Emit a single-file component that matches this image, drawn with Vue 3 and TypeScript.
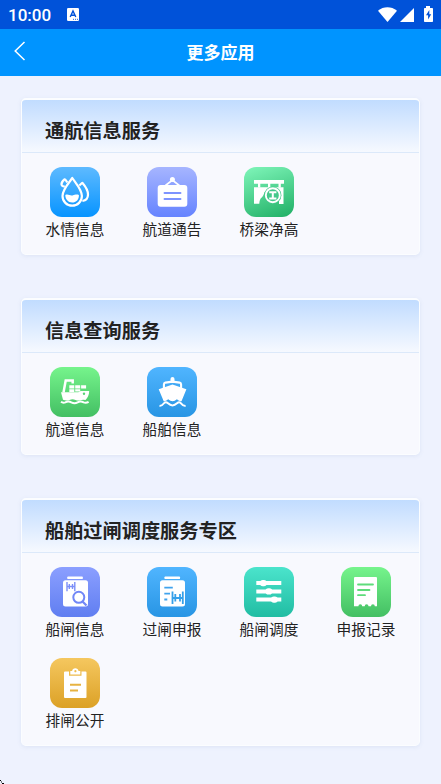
<script setup lang="ts">
type IconName =
  | 'water' | 'notice' | 'bridge' | 'cargo' | 'ship'
  | 'lockInfo' | 'declare' | 'dispatch' | 'record' | 'publish'

interface AppEntry {
  label: string
  icon: IconName
}

interface Section {
  title: string
  apps: AppEntry[]
}

const sections: Section[] = [
  {
    title: '通航信息服务',
    apps: [
      { label: '水情信息', icon: 'water' },
      { label: '航道通告', icon: 'notice' },
      { label: '桥梁净高', icon: 'bridge' },
    ],
  },
  {
    title: '信息查询服务',
    apps: [
      { label: '航道信息', icon: 'cargo' },
      { label: '船舶信息', icon: 'ship' },
    ],
  },
  {
    title: '船舶过闸调度服务专区',
    apps: [
      { label: '船闸信息', icon: 'lockInfo' },
      { label: '过闸申报', icon: 'declare' },
      { label: '船闸调度', icon: 'dispatch' },
      { label: '申报记录', icon: 'record' },
      { label: '排闸公开', icon: 'publish' },
    ],
  },
]
</script>

<template>
  <div class="screen">
    <div class="status">
      <span class="clock">10:00</span>
      <svg class="keyboard" width="12" height="13" viewBox="0 0 12 13">
        <rect width="12" height="13" rx="1.3" fill="#fff" />
        <path d="M3.2 9 6 3 8.8 9M4.2 7.2h3.6" fill="none" stroke="#0052d9" stroke-width="1.4" />
        <path d="M6 11.3h1M8 11.3h1M10 11.3h1" stroke="#0052d9" stroke-width=".9" />
      </svg>
      <svg class="signals" width="57" height="17" viewBox="0 0 57 17" fill="#fff">
        <path d="M0 4.7C5.5.1 13.3.1 19 4.7L9.5 16Z" />
        <path d="M22 16 36 2v14Z" />
        <path d="M48 0h4v2h2.2q.8 0 .8.8v12.4q0 .8-.8.8h-7.4q-.8 0-.8-.8V2.800q0-.8.8-.8H48Z" />
        <path d="M51.300 4 48 9.300h2.100V13.500L53.200 8.200h-1.900Z" fill="#0052d9" />
      </svg>
    </div>

    <header class="navbar">
      <svg class="back" width="12" height="20" viewBox="0 0 12 20">
        <path d="M10.500 1 1.200 10l9.300 9" fill="none" stroke="#fff" stroke-width="1.500" />
      </svg>
      <h1>更多应用</h1>
    </header>

    <main class="content">
      <section v-for="section in sections" :key="section.title" class="card">
        <h2>{{ section.title }}</h2>
        <div class="grid">
          <div v-for="app in section.apps" :key="app.label" class="app">
            <div class="tile" :class="app.icon">
              <svg width="50" height="50" viewBox="0 0 50 50" fill="#fff">
                <g v-if="app.icon === 'water'" fill="none" stroke="#fff" stroke-width="2.200" stroke-linejoin="round">
                  <path d="M22.300 11C18.500 16.500 12.500 22.500 12.500 29a9.700 9.700 0 0 0 19.400 0C31.900 22.500 26 16.500 22.300 11Z" />
                  <path d="M29.300 18.500 32.300 15.800C35.500 19.500 38 22.500 38 27.500c0 3.500-2.300 6-5.600 6.500" />
                  <path d="M17.300 15.500Q15.500 12 14.500 12.300C12.500 14 11.300 15.500 11.500 17.300c.2 1.700 1.700 2.500 3.300 2" />
                  <path d="M15.300 28.100c2.700-1.600 4.700 1 7.200.3 2.500-.7 3.900-1.300 6.400-.5.3 4.200-2.600 7.700-6.800 7.700-3.900 0-6.800-3.200-6.800-7.500Z" fill="#fff" stroke="none" />
                </g>
                <g v-else-if="app.icon === 'notice'">
                  <rect x="10.700" y="18" width="29.600" height="21.800" rx="3" />
                  <circle cx="25.400" cy="12.600" r="2.500" />
                  <path d="M18.500 18.500 25.400 13l6.900 5.500" fill="none" stroke="#fff" stroke-width="1.700" />
                  <path d="M17.500 26h16M17.500 32h16" stroke="#7d93ff" stroke-width="1.900" stroke-linecap="round" />
                </g>
                <g v-else-if="app.icon === 'bridge'">
                  <path d="M10 13h30v3.700H10ZM14 16.500h2.300v4H14ZM24 16.500h2.300v4H24ZM34.500 16.500h2.300v4h-2.300Z" />
                  <path d="M10 20.200h29.500V37h-4.500V25H20.700c-.8 1.500-1.200 4-2.700 5.200-1.800 1.300-2.500 3.300-2.700 6.500H10Z" />
                  <circle cx="28.800" cy="28.200" r="8.600" fill="#45c98b" />
                  <circle cx="28.800" cy="28.200" r="7" fill="none" stroke="#fff" stroke-width="1.900" />
                  <path d="M25.200 25.200h7.200M25.200 31.400h7.200M28.800 25.200v6.200" stroke="#fff" stroke-width="2" />
                </g>
                <g v-else-if="app.icon === 'cargo'">
                  <path d="M11 25.300h17.300l2.400-1.400h8.500C39.200 28 37.500 30.500 35.500 33q-2-.6-4-.1-3 1.300-6 0-3-1.300-6 0-3 1.100-6.500-.2Z" />
                  <path d="M13.500 25.500 15.700 13.500h7v3" fill="none" stroke="#fff" stroke-width="2.500" />
                  <path d="M19.300 18.300h5v3.200h-5ZM25.200 18.300h5v3.200h-5ZM31.100 18.300h5v3.200h-5ZM19.300 22.200h5v2.700h-5ZM25.200 22.200h5v2.400h-5Z" />
                  <circle cx="34" cy="26.700" r="1.200" fill="#58d477" />
                  <path d="M11 34.800q2 1.500 4.300.5 3.200-1.700 6 .1 3.300 1.600 6.300 0 3-1.600 6 0 2.400 1 5-.5" fill="none" stroke="#fff" stroke-width="2" />
                </g>
                <g v-else-if="app.icon === 'ship'">
                  <path d="M23.500 15v-3q0-2 2-2t2 2v3Z" />
                  <path d="M16.900 22v-4.500q0-1.500 1.500-1.900l7.100-1 7.100 1q1.500.4 1.500 1.900V22" fill="none" stroke="#fff" stroke-width="2.100" />
                  <path d="M25.500 17.500 39.400 22.300 34.500 34.300q-2.500.1-4.600-2-4.300 3.700-8.700 0-2.200 2.100-4.500 2L11.700 22.300Z" />
                  <path d="M12.500 39q2.500 0 4.500-2.700 1.700-2.200 4 0 4.500 4.200 9 0 2.300-2.200 4 0 2 2.700 4.600 2.700" fill="none" stroke="#fff" stroke-width="1.900" />
                </g>
                <g v-else-if="app.icon === 'lockInfo'">
                  <rect x="17.300" y="9.600" width="15.500" height="2.500" rx=".7" />
                  <rect x="13" y="13.200" width="25" height="26.400" rx="2.500" />
                  <path d="M17 15v9.300M19.300 17v5M22.500 17v5M24.800 15v9.300M17 19.500h8" stroke="#7c8ff8" stroke-width="1.400" />
                  <circle cx="28.800" cy="30.300" r="5.500" fill="#fff" stroke="#7187f7" stroke-width="2" />
                  <path d="m32.500 34.500 4 4" stroke="#7187f7" stroke-width="2.300" />
                </g>
                <g v-else-if="app.icon === 'declare'">
                  <rect x="17.500" y="9.600" width="15.500" height="2.500" rx=".7" />
                  <rect x="13" y="13.200" width="25" height="26.400" rx="2.500" />
                  <path d="M17.300 20.600h8.500M17.300 26.600h5.700M17.300 32.500h3" stroke="#40a3ed" stroke-width="1.800" />
                  <path d="M25.500 24.500v12.500M28.300 27v7.500M33 27v7.500M35.800 24.500v12.500M25.500 31h10.500" stroke="#35a0e9" stroke-width="1.800" />
                </g>
                <g v-else-if="app.icon === 'dispatch'">
                  <path d="M12.300 14h25v4h-25ZM12.300 22.400h25v4h-25ZM12.300 30.600h25v4h-25Z" />
                  <rect x="16" y="12.900" width="6.700" height="6.400" rx="2.800" />
                  <rect x="21.500" y="21.200" width="6.700" height="6.400" rx="2.800" />
                  <rect x="27" y="29.400" width="6.700" height="6.400" rx="2.800" />
                </g>
                <g v-else-if="app.icon === 'record'">
                  <path d="M14 10h21q1 0 1 1v28.200h-2.200a1.900 1.900 0 0 0-3.800 0h-2.500a1.900 1.900 0 0 0-3.800 0h-2.500a1.900 1.900 0 0 0-3.800 0H13V11q0-1 1-1Z" />
                  <path d="M17 17.500h15M17 23h11.500M17 28.200h7" stroke="#5edc7b" stroke-width="1.800" stroke-linecap="round" />
                </g>
                <g v-else>
                  <path d="M15 13.500h4v4.300h12.500v-4.300h4q1 0 1 1V39q0 1-1 1H15q-1 0-1-1V14.500q0-1 1-1Z" />
                  <path fill-rule="evenodd" d="M20.300 13h1.800q.5-2.700 3.200-2.700T28.500 13h1.800v3.500h-10ZM25.400 12a1.100 1.100 0 1 0 .01 0Z" />
                  <path d="M20 26.800h11M20 32.500h8" stroke="#e7b341" stroke-width="2.100" />
                </g>
              </svg>
            </div>
            <span class="label">{{ app.label }}</span>
          </div>
        </div>
      </section>
    </main>
    <svg class="corner" width="4" height="4" viewBox="0 0 4 4">
      <path d="M0 0h1v1H0ZM1 1.500h1v1H1ZM2 3h2v1H2Z" fill="#000" />
    </svg>
  </div>
</template>

<style>
body {
  margin: 0;
  background: #eef2fe;
}
</style>

<style scoped>
.screen {
  position: relative;
  height: 784px;
  overflow: hidden;
  background: #eef2fe;
  color: #222;
  font-family: Roboto, "Noto Sans CJK SC", sans-serif;
}

.status {
  display: flex;
  align-items: center;
  box-sizing: border-box;
  height: 29px;
  padding: 0 6px 0 8px;
  background: #0052d9;
  color: #fff;
}

.clock {
  width: 59px;
  font-size: 17px;
  font-weight: 500;
  line-height: 29px;
  padding-top: 2px;
}

.signals {
  margin-left: auto;
}

.navbar {
  display: flex;
  align-items: center;
  height: 47px;
  background: #0094ff;
  color: #fff;
}

.back {
  margin: -3px 0 0 14px;
}

h1 {
  flex: 1;
  margin: 0 26px 0 0;
  padding-top: 2px;
  font-size: 17px;
  line-height: 47px;
  font-weight: 700;
  text-align: center;
}

.content {
  display: flex;
  flex-direction: column;
  gap: 43px;
  padding: 22px 21px;
}

.card {
  box-sizing: border-box;
  overflow: hidden;
  border: 1px solid #fbfdff;
  border-top-width: 2px;
  border-radius: 5px;
  background: #f8f9fe;
  box-shadow: 0 1px 4px rgba(100, 130, 180, 0.12);
}

h2 {
  margin: 0;
  height: 52px;
  padding-left: 23px;
  border-bottom: 1px solid #dce9fa;
  background: linear-gradient(#c1dcff, #f6f9ff);
  font-size: 19.2px;
  line-height: 63px;
  font-weight: 700;
}

.grid {
  display: grid;
  grid-template-columns: repeat(4, 97px);
  row-gap: 16px;
  padding: 14px 0 12px 4.5px;
}

.app {
  display: flex;
  flex-direction: column;
  align-items: center;
  height: 75px;
}

.tile {
  width: 50px;
  height: 50px;
  border-radius: 12px;
}

.tile svg {
  display: block;
}

.label {
  margin-top: 2px;
  font-size: 14.7px;
  line-height: 22px;
}

.water { background: linear-gradient(#5ebaff, #0794ff); }
.notice { background: linear-gradient(#a6b5ff, #6583ff); }
.bridge { background: linear-gradient(160deg, #80f6ba, #1faf65); }
.cargo,
.record { background: linear-gradient(#76f48c, #43bf63); }
.ship,
.declare { background: linear-gradient(#50b5ff, #2895e4); }
.lockInfo { background: linear-gradient(#8b9fff, #607ef1); }
.dispatch { background: linear-gradient(#4be4cc, #21bda3); }
.publish { background: linear-gradient(#f5c75f, #dca126); }

.corner {
  position: absolute;
  left: 0;
  bottom: 0;
}
</style>
